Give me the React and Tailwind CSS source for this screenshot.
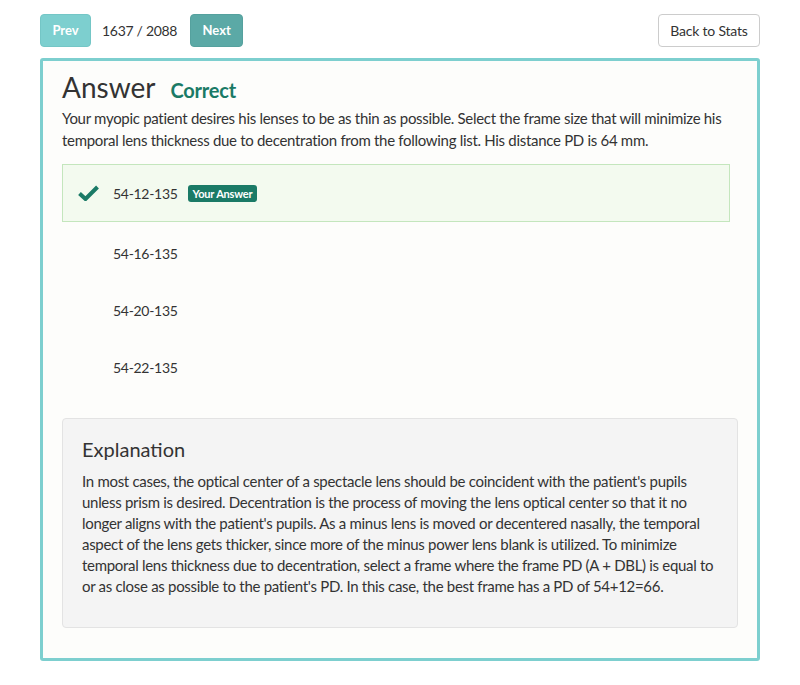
import React from "react";

const options = [
  { label: "54-12-135", selected: true },
  { label: "54-16-135" },
  { label: "54-20-135" },
  { label: "54-22-135" },
];

const explanationLines = [
  "In most cases, the optical center of a spectacle lens should be coincident with the patient's pupils",
  "unless prism is desired. Decentration is the process of moving the lens optical center so that it no",
  "longer aligns with the patient's pupils. As a minus lens is moved or decentered nasally, the temporal",
  "aspect of the lens gets thicker, since more of the minus power lens blank is utilized. To minimize",
  "temporal lens thickness due to decentration, select a frame where the frame PD (A + DBL) is equal to",
  "or as close as possible to the patient's PD. In this case, the best frame has a PD of 54+12=66.",
];

export default function App() {
  return (
    <div
      className="w-[800px] h-[685px] bg-white text-[#333333]"
      style={{ fontFamily: "Lato, 'Open Sans', sans-serif" }}
    >
      <div className="px-[40px] pt-[14px]">
        <div className="flex items-center justify-between h-[33px]">
          <div className="flex items-center">
            <button className="h-[33px] w-[51px] rounded-[4px] bg-[#7dcfcf] border border-[#74c6c6] text-white font-bold text-[13px]">
              Prev
            </button>
            <span className="ml-[11px] mr-[13px] text-[14px] tracking-[-0.3px] text-[#333]">1637 / 2088</span>
            <button className="h-[33px] w-[53px] rounded-[4px] bg-[#5ba9a6] border border-[#55a19e] text-white font-bold text-[13px]">
              Next
            </button>
          </div>
          <button className="h-[33px] w-[102px] rounded-[4px] bg-white border border-[#cccccc] text-[14px] tracking-[-0.2px] text-[#333]">
            Back to Stats
          </button>
        </div>

        <div className="mt-[11px] h-[603px] border-[3px] border-[#7dcfcf] rounded-[3px] bg-[#fdfdfb] px-[19px] pt-[6px]">
          <div className="flex items-baseline">
            <h1 className="text-[28px] leading-[40px] text-[#333]">Answer</h1>
            <span className="ml-[15px] text-[20px] font-bold text-[#1a7a66] tracking-[-0.2px]">Correct</span>
          </div>
          <p className="text-[15px] leading-[22px] tracking-[-0.3px] text-[#333]">
            Your myopic patient desires his lenses to be as thin as possible. Select the frame size that will minimize his temporal lens thickness due to decentration from the following list. His distance PD is 64 mm.
          </p>

          <div className="mt-[13px] mr-[8px]">
            {options.map((o) => (
              <div
                key={o.label}
                className={
                  o.selected
                    ? "flex items-center h-[58px] mb-[3px] border border-[#c4e6bd] bg-[#f3faef] pl-[15px]"
                    : "flex items-center h-[57px] border border-transparent pl-[15px]"
                }
              >
                <div className="w-[35px] flex items-center">
                  {o.selected && (
                    <svg width="21" height="16" viewBox="0 0 21 16">
                      <path d="M1.5 8.5 L7.5 14 L19.5 2" fill="none" stroke="#1a7a66" strokeWidth="4" strokeLinejoin="miter" />
                    </svg>
                  )}
                </div>
                <span className="text-[14px] tracking-[-0.3px] text-[#333]">{o.label}</span>
                {o.selected && (
                  <span className="ml-[10px] bg-[#1a7a66] text-white text-[11px] font-bold rounded-[3px] px-[5px] h-[17px] leading-[17px] tracking-[-0.2px]">
                    Your Answer
                  </span>
                )}
              </div>
            ))}
          </div>

          <div className="mt-[22px] bg-[#f4f4f4] border border-[#e3e3e3] rounded-[4px] px-[19px] pt-[15px] pb-[30px]">
            <h2 className="text-[20px] leading-[30px] text-[#333]">Explanation</h2>
            <p className="mt-[7px] text-[15px] leading-[21px] tracking-[-0.3px] text-[#333]">
              {explanationLines.map((line) => (
                <span key={line} className="block whitespace-nowrap">
                  {line}
                </span>
              ))}
            </p>
          </div>
        </div>
      </div>
    </div>
  );
}
